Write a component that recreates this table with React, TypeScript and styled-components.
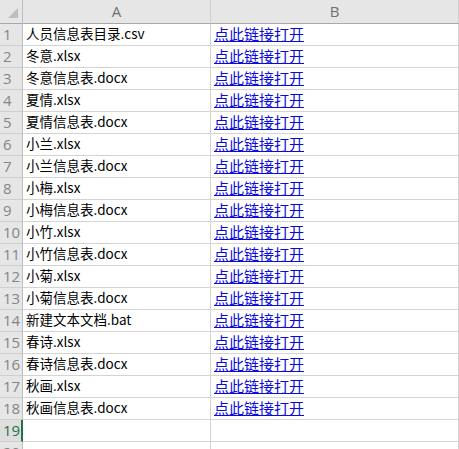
import React from "react";
import styled, { createGlobalStyle } from "styled-components";

const Global = createGlobalStyle`
  html, body { margin: 0; padding: 0; background: #fff; }
  body { overflow: hidden; }
`;

const files = [
  "人员信息表目录.csv",
  "冬意.xlsx",
  "冬意信息表.docx",
  "夏情.xlsx",
  "夏情信息表.docx",
  "小兰.xlsx",
  "小兰信息表.docx",
  "小梅.xlsx",
  "小梅信息表.docx",
  "小竹.xlsx",
  "小竹信息表.docx",
  "小菊.xlsx",
  "小菊信息表.docx",
  "新建文本文档.bat",
  "春诗.xlsx",
  "春诗信息表.docx",
  "秋画.xlsx",
  "秋画信息表.docx",
];

const Sheet = styled.div`
  width: 459px;
  height: 449px;
  overflow: hidden;
  display: grid;
  grid-template-columns: 23px 188px 1fr;
  grid-auto-rows: 22px;
  grid-template-rows: 24px;
  font-family: "Noto Sans CJK SC", "Noto Sans", sans-serif;
`;

const Corner = styled.div`
  position: relative;
  background: #e6e6e6;
  border-right: 1px solid #bdbdbd;
  border-bottom: 1px solid #a8a8a8;
  box-sizing: border-box;
`;

const CornerTriangle = styled.div`
  position: absolute;
  right: 4px;
  bottom: 5px;
  width: 0;
  height: 0;
  border-left: 10px solid transparent;
  border-bottom: 10px solid #bdbdbd;
`;

const ColHead = styled.div`
  background: #e6e6e6;
  border-right: 1px solid #d0d0d0;
  border-bottom: 1px solid #a8a8a8;
  box-sizing: border-box;
  display: flex;
  align-items: center;
  justify-content: center;
  padding-bottom: 2px;
  font-family: "Open Sans", "Liberation Sans", sans-serif;
  font-size: 15px;
  color: #707070;
`;

const RowHead = styled.div<{ $active?: boolean }>`
  background: ${(p) => (p.$active ? "#dedede" : "#e6e6e6")};
  border-right: ${(p) => (p.$active ? "2px solid #217346" : "1px solid #bdbdbd")};
  border-bottom: 1px solid #cfcfcf;
  box-sizing: border-box;
  display: flex;
  align-items: center;
  padding-left: 3px;
  padding-bottom: 2px;
  font-family: "Open Sans", "Liberation Sans", sans-serif;
  font-size: 15px;
  color: ${(p) => (p.$active ? "#217346" : "#858585")};
`;

const Cell = styled.div`
  border-right: 1px solid #d4d4d4;
  border-bottom: 1px solid #d4d4d4;
  box-sizing: border-box;
  display: flex;
  align-items: center;
  padding-left: 3px;
  padding-bottom: 3px;
  white-space: nowrap;
  overflow: hidden;
  font-size: 13.5px;
  color: #000;
`;

const LinkText = styled.a`
  font-family: "Noto Sans CJK SC", sans-serif;
  font-size: 15px;
  color: #0a0adc;
  text-decoration: underline;
  text-underline-offset: 1px;
  cursor: pointer;
`;

export default function App() {
  const rows = [];
  const total = 21;
  for (let i = 0; i < total; i++) {
    const name = files[i];
    rows.push(
      <React.Fragment key={i}>
        <RowHead $active={i === 18}>{i + 1}</RowHead>
        <Cell>{name ?? ""}</Cell>
        <Cell>{name ? <LinkText>点此链接打开</LinkText> : null}</Cell>
      </React.Fragment>
    );
  }
  return (
    <>
      <Global />
      <Sheet>
        <Corner>
          <CornerTriangle />
        </Corner>
        <ColHead>A</ColHead>
        <ColHead>B</ColHead>
        {rows}
      </Sheet>
    </>
  );
}
